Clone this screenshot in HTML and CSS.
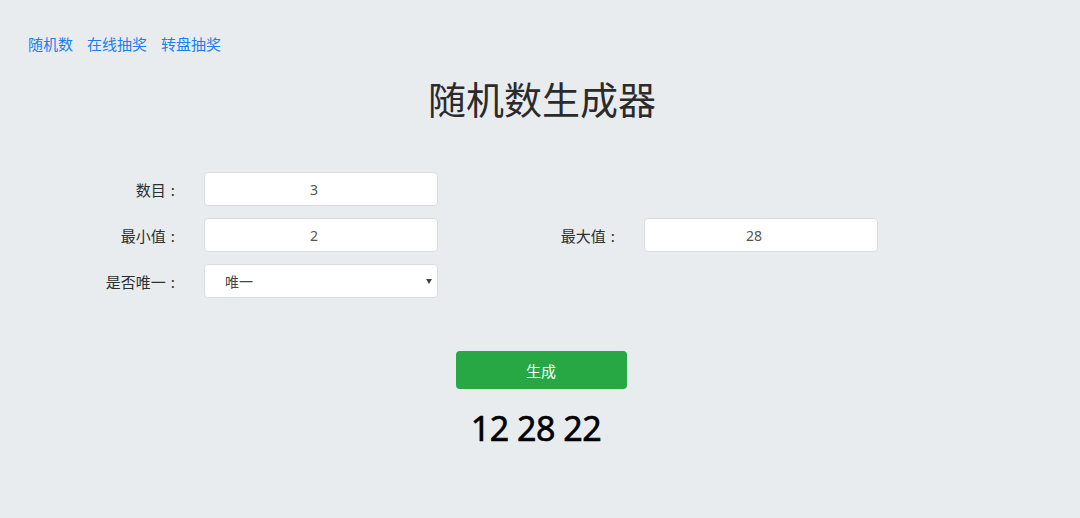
FILE: index.html
```html
<!DOCTYPE html>
<html lang="zh-CN">
<head>
<meta charset="utf-8">
<title>随机数生成器</title>
<link rel="stylesheet" href="styles.css">
</head>
<body>
<nav class="nav">
  <a href="#" class="nav-link">随机数</a>
  <a href="#" class="nav-link">在线抽奖</a>
  <a href="#" class="nav-link">转盘抽奖</a>
</nav>
<h1 class="title">随机数生成器</h1>
<form class="form">
  <label class="label">数目<span class="colon">:</span></label>
  <input class="field" type="text" value="3">
  <div class="spacer"></div>
  <div class="empty"></div>
  <div class="empty"></div>

  <label class="label">最小值<span class="colon">:</span></label>
  <input class="field" type="text" value="2">
  <div class="spacer"></div>
  <label class="label">最大值<span class="colon">:</span></label>
  <input class="field" type="text" value="28">

  <label class="label">是否唯一<span class="colon">:</span></label>
  <div class="select-wrap">
    <select class="select">
      <option>唯一</option>
      <option>不唯一</option>
    </select>
    <span class="caret"></span>
  </div>
</form>
<div class="actions">
  <button class="btn" type="button">生成</button>
</div>
<div class="result">12 28 22</div>
</body>
</html>
```

FILE: styles.css
```css
html, body {
  margin: 0;
  padding: 0;
}
body {
  background: #e9ecef;
  font-family: "Noto Sans CJK SC", "Noto Sans", sans-serif;
  color: #333;
}
.nav {
  padding: 34px 28px 0;
  display: flex;
  gap: 14px;
  font-size: 15px;
  line-height: 20px;
}
.nav-link {
  color: #1a7ef0;
  text-decoration: none;
}
.title {
  margin: 20px 0 0;
  text-align: center;
  font-size: 38px;
  line-height: 48px;
  font-weight: 400;
  color: #2b2b2b;
  padding-left: 4px;
}
.form {
  margin: 50px 0 0 94px;
  display: grid;
  grid-template-columns: 110px 234px 96px 110px 234px;
  grid-auto-rows: 34px;
  row-gap: 12px;
}
.label {
  font-size: 15px;
  color: #2e2e2e;
  text-align: right;
  padding-right: 29px;
  display: flex;
  align-items: center;
  justify-content: flex-end;
  padding-left: 0;
}
.colon {
  margin-left: 5px;
}
.field {
  box-sizing: border-box;
  height: 34px;
  width: 234px;
  border: 1px solid #d9dde2;
  border-radius: 4px;
  background: #fff;
  text-align: center;
  font-family: "Noto Sans", "Noto Sans CJK SC", sans-serif;
  font-size: 14px;
  color: #555;
  padding: 0 26px 0 12px;
  outline: none;
}
.select-wrap {
  position: relative;
  width: 234px;
  height: 34px;
}
.select {
  box-sizing: border-box;
  appearance: none;
  -webkit-appearance: none;
  width: 100%;
  height: 34px;
  border: 1px solid #d9dde2;
  border-radius: 4px;
  background: #fff;
  font-family: "Noto Sans CJK SC", sans-serif;
  font-size: 14px;
  color: #444;
  padding: 0 20px;
  outline: none;
}
.caret {
  position: absolute;
  right: 6px;
  top: 15px;
  width: 0;
  height: 0;
  border-left: 3px solid transparent;
  border-right: 3px solid transparent;
  border-top: 5px solid #444;
  pointer-events: none;
}
.actions {
  display: flex;
  justify-content: center;
  margin-top: 53px;
  padding-left: 2px;
}
.btn {
  width: 171px;
  height: 38px;
  border: none;
  border-radius: 4px;
  background: #28a745;
  color: #fff;
  font-family: "Noto Sans CJK SC", sans-serif;
  font-size: 15px;
  cursor: pointer;
}
.result {
  margin-top: 19px;
  text-align: center;
  font-family: "Noto Sans", sans-serif;
  font-size: 34px;
  line-height: 40px;
  color: #000;
  -webkit-text-stroke: 0.6px #000;
  letter-spacing: -0.5px;
  padding-right: 8px;
}
```
